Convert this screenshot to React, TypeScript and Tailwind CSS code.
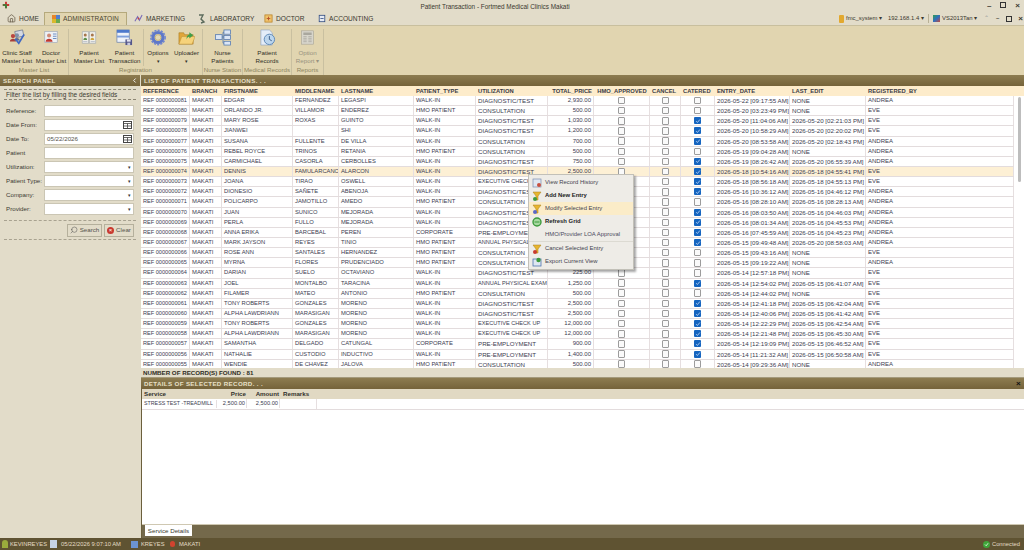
import { ChevronLeft, Search, Home } from "lucide-react";

const FONT = "font-['Liberation_Sans',Arial,sans-serif]";
const GRID =
  "grid grid-cols-[49px_32px_71px_46px_75px_62px_72px_46px_56px_31px_34px_75px_76px_148px]";

const heads = [
  "REFERENCE", "BRANCH", "FIRSTNAME", "MIDDLENAME", "LASTNAME", "PATIENT_TYPE", "UTILIZATION",
  "TOTAL_PRICE", "HMO_APPROVED", "CANCEL", "CATERED", "ENTRY_DATE", "LAST_EDIT", "REGISTERED_BY",
];

const D = "DIAGNOSTIC/TEST";
const C = "CONSULTATION";
const W = "WALK-IN";
const H = "HMO PATIENT";

type Row = [string, string, string, string, string, string, string, boolean, string, string, string];

const rows: Row[] = [
  ["81", "EDGAR", "FERNANDEZ", "LEGASPI", W, D, "2,930.00", false, "2026-05-22 [09:17:55 AM]", "NONE", "ANDREA"],
  ["80", "ORLANDO JR.", "VILLAMOR", "ENDEREZ", H, C, "500.00", false, "2026-05-20 [03:23:49 PM]", "NONE", "EVE"],
  ["79", "MARY ROSE", "ROXAS", "GUINTO", W, D, "1,030.00", true, "2026-05-20 [11:04:06 AM]", "2026-05-20 [02:21:03 PM]", "EVE"],
  ["78", "JIANWEI", "", "SHI", W, D, "1,200.00", true, "2026-05-20 [10:58:29 AM]", "2026-05-20 [02:20:02 PM]", "EVE"],
  ["77", "SUSANA", "FULLENTE", "DE VILLA", W, C, "700.00", true, "2026-05-20 [08:53:58 AM]", "2026-05-20 [02:18:43 PM]", "ANDREA"],
  ["76", "REBEL ROYCE", "TRINOS", "RETANIA", H, C, "500.00", false, "2026-05-19 [09:04:28 AM]", "NONE", "ANDREA"],
  ["75", "CARMICHAEL", "CASORLA", "CERBOLLES", W, D, "750.00", true, "2026-05-19 [08:26:42 AM]", "2026-05-20 [06:55:39 AM]", "ANDREA"],
  ["74", "DENNIS", "FAMULARCANO", "ALARCON", W, D, "2,500.00", true, "2026-05-18 [10:54:16 AM]", "2026-05-18 [04:55:41 PM]", "EVE"],
  ["73", "JOANA", "TIRAO", "OSWELL", W, "EXECUTIVE CHECK UP", "12,000.00", true, "2026-05-18 [08:56:18 AM]", "2026-05-18 [04:55:13 PM]", "EVE"],
  ["72", "DIONESIO", "SAÑETE", "ABENOJA", W, D, "1,500.00", true, "2026-05-16 [10:36:12 AM]", "2026-05-16 [04:46:12 PM]", "ANDREA"],
  ["71", "POLICARPO", "JAMOTILLO", "AMEDO", H, C, "500.00", false, "2026-05-16 [08:28:10 AM]", "2026-05-16 [08:28:13 AM]", "ANDREA"],
  ["70", "JUAN", "SUNICO", "MEJORADA", W, D, "1,200.00", true, "2026-05-16 [08:03:50 AM]", "2026-05-16 [04:46:03 PM]", "ANDREA"],
  ["69", "PERLA", "FULLO", "MEJORADA", W, D, "1,200.00", true, "2026-05-16 [08:01:34 AM]", "2026-05-16 [04:45:53 PM]", "ANDREA"],
  ["68", "ANNA ERIKA", "BARCEBAL", "PEREN", "CORPORATE", "PRE-EMPLOYMENT", "900.00", true, "2026-05-16 [07:45:59 AM]", "2026-05-16 [04:45:23 PM]", "ANDREA"],
  ["67", "MARK JAYSON", "REYES", "TINIO", H, "ANNUAL PHYSICAL EXAM", "1,250.00", true, "2026-05-15 [09:49:48 AM]", "2026-05-20 [08:58:03 AM]", "ANDREA"],
  ["66", "ROSE ANN", "SANTALES", "HERNANDEZ", H, C, "500.00", false, "2026-05-15 [09:43:16 AM]", "NONE", "EVE"],
  ["65", "MYRNA", "FLORES", "PRUDENCIADO", H, C, "500.00", false, "2026-05-15 [09:19:22 AM]", "NONE", "ANDREA"],
  ["64", "DARIAN", "SUELO", "OCTAVIANO", W, D, "225.00", false, "2026-05-14 [12:57:18 PM]", "NONE", "EVE"],
  ["63", "JOEL", "MONTALBO", "TARACINA", W, "ANNUAL PHYSICAL EXAM", "1,250.00", true, "2026-05-14 [12:54:02 PM]", "2026-05-15 [06:41:07 AM]", "EVE"],
  ["62", "FILAMER", "MATEO", "ANTONIO", H, C, "500.00", false, "2026-05-14 [12:44:02 PM]", "NONE", "EVE"],
  ["61", "TONY ROBERTS", "GONZALES", "MORENO", W, D, "2,500.00", true, "2026-05-14 [12:41:18 PM]", "2026-05-15 [06:42:04 AM]", "EVE"],
  ["60", "ALPHA LAWDRIANN", "MARASIGAN", "MORENO", W, D, "2,500.00", true, "2026-05-14 [12:40:06 PM]", "2026-05-15 [06:41:42 AM]", "EVE"],
  ["59", "TONY ROBERTS", "GONZALES", "MORENO", W, "EXECUTIVE CHECK UP", "12,000.00", true, "2026-05-14 [12:22:29 PM]", "2026-05-15 [06:42:54 AM]", "EVE"],
  ["58", "ALPHA LAWDRIANN", "MARASIGAN", "MORENO", W, "EXECUTIVE CHECK UP", "12,000.00", true, "2026-05-14 [12:21:48 PM]", "2026-05-15 [06:45:30 AM]", "EVE"],
  ["57", "SAMANTHA", "DELGADO", "CATUNGAL", "CORPORATE", "PRE-EMPLOYMENT", "900.00", true, "2026-05-14 [12:19:09 PM]", "2026-05-15 [06:46:52 AM]", "EVE"],
  ["56", "NATHALIE", "CUSTODIO", "INDUCTIVO", W, "PRE-EMPLOYMENT", "1,400.00", true, "2026-05-14 [11:21:32 AM]", "2026-05-15 [06:50:58 AM]", "EVE"],
  ["55", "WENDIE", "DE CHAVEZ", "JALOVA", H, C, "500.00", false, "2026-05-14 [09:29:36 AM]", "NONE", "ANDREA"],
];

const CheckBox = ({ on }: { on?: boolean }) =>
  on ? (
    <span className="flex h-[7px] w-[7px] items-center justify-center rounded-[1px] bg-[#1565c0]">
      <svg viewBox="0 0 8 8" className="h-[6px] w-[6px]">
        <path d="M1.5 4.2 3.2 6 6.5 2" fill="none" stroke="#cfe2fa" strokeWidth="1" />
      </svg>
    </span>
  ) : (
    <span className="h-[7.5px] w-[7px] rounded-[1px] border border-[#9c9c9c] bg-[#fafafa]" />
  );

const Cell = ({ children, cls = "" }: { children?: React.ReactNode; cls?: string }) => (
  <div className={`overflow-hidden whitespace-nowrap border-r border-[#e6dfe0] px-[2px] ${cls}`}>{children}</div>
);

const GridRow = ({ row }: { row: Row }) => {
  const selected = row[0] === "74";
  return (
    <div className={`${GRID} h-[10.15px] shrink-0 items-stretch border-b border-[#e3dcdd] leading-[9px] text-[#3c3c50] ${selected ? "bg-[#fdf0d5]" : "bg-white"}`}>
      <Cell cls="text-[5.6px]">REF 00000000{row[0]}</Cell>
      <Cell cls="text-[5.9px]">MAKATI</Cell>
      <Cell cls="text-[5.8px]">{row[1]}</Cell>
      <Cell cls="text-[5.8px]">{row[2]}</Cell>
      <Cell cls="text-[5.8px]">{row[3]}</Cell>
      <Cell cls="text-[5.9px]">{row[4]}</Cell>
      <Cell cls={row[5].length >= 18 ? "text-[5.6px]" : "text-[6.2px]"}>{row[5]}</Cell>
      <Cell cls="text-right text-[6px]">{row[6]}</Cell>
      <Cell cls="flex items-center justify-center"><CheckBox /></Cell>
      <Cell cls="flex items-center justify-center"><CheckBox /></Cell>
      <Cell cls="flex items-center justify-center"><CheckBox on={row[7]} /></Cell>
      <Cell cls="text-[6.2px]">{row[8]}</Cell>
      <Cell cls="text-[6.2px]">{row[9]}</Cell>
      <Cell cls="text-[6px]">{row[10]}</Cell>
    </div>
  );
};

const ClinicIcon = () => (
  <svg viewBox="0 0 18 18" className="h-[16px] w-[18px]">
    <rect x="7" y="2" width="9" height="7" fill="#d5d9e2" stroke="#5d6a86" strokeWidth=".7" transform="rotate(-12 11 5)" />
    <circle cx="4.5" cy="8" r="2.4" fill="#b9453f" />
    <circle cx="9" cy="7" r="2.2" fill="#7f8fa8" />
    <path d="M1 14c0-4 7-4 7 0z" fill="#a83d3a" />
    <path d="M6 13c0-4 6-4 6 0z" fill="#5d6c8a" />
    <path d="m7 11 4 5 6-10" fill="none" stroke="#3f68c4" strokeWidth="2" />
  </svg>
);
const DoctorIcon = () => (
  <svg viewBox="0 0 18 18" className="h-[14px] w-[16px]">
    <rect x="1" y="2" width="16" height="14" fill="#eef1f5" stroke="#9aa6b8" strokeWidth=".8" />
    <circle cx="6.5" cy="7" r="2.6" fill="#cf8a76" />
    <path d="M2 15c0-5 9-5 9 0z" fill="#c0392f" />
    <path d="M11.5 5h4.5M11.5 8h4.5M11.5 11h4.5" stroke="#6f8fc4" strokeWidth="1.3" />
  </svg>
);
const BookIcon = () => (
  <svg viewBox="0 0 18 18" className="h-[15px] w-[16px]">
    <path d="M1 2h7.5v14H1zM9.5 2H17v14H9.5z" fill="#f0efe8" stroke="#9aa3ae" strokeWidth=".7" />
    <circle cx="4.5" cy="6" r="1.8" fill="#a6764c" />
    <path d="M2.3 12c0-3.5 4.4-3.5 4.4 0z" fill="#5c8f49" />
    <circle cx="13" cy="6" r="1.8" fill="#a6764c" />
    <path d="M10.8 12c0-3.5 4.4-3.5 4.4 0z" fill="#d0a53c" />
    <path d="M2 14h5M11 14h5" stroke="#9aa5b8" strokeWidth=".8" />
  </svg>
);
const TransIcon = () => (
  <svg viewBox="0 0 18 18" className="h-[17px] w-[17px]">
    <rect x="1" y="1" width="13" height="13" fill="#eef2f9" stroke="#5f77a8" strokeWidth=".7" />
    <rect x="1" y="1" width="13" height="3" fill="#4d79cc" />
    <rect x="1" y="7" width="13" height="2" fill="#7fa0dc" />
    <rect x="10" y="11" width="7" height="6" fill="#55578a" />
    <rect x="11.5" y="11" width="4" height="2.4" fill="#e6e6ee" />
    <rect x="12" y="14.5" width="3" height="2.5" fill="#c9cbe0" />
  </svg>
);
const GearIcon = () => (
  <svg viewBox="0 0 18 18" className="h-[17px] w-[16px]">
    <circle cx="9" cy="9" r="5.6" fill="none" stroke="#5f78c8" strokeWidth="3.6" />
    <circle cx="9" cy="9" r="8" fill="none" stroke="#7186cf" strokeWidth="1.8" strokeDasharray="2.4 1.3" />
    <circle cx="9" cy="9" r="3.2" fill="#e3d7b3" stroke="#b9a04e" strokeWidth=".6" />
  </svg>
);
const FolderIcon = () => (
  <svg viewBox="0 0 18 18" className="h-[17px] w-[17px]">
    <path d="M1 4h5l1 2h9v10H1z" fill="#e0a63a" stroke="#a97a20" strokeWidth=".6" />
    <path d="M4 8h14l-3 8H1z" fill="#f6d27a" stroke="#b98a2c" strokeWidth=".5" />
    <path d="M9 11c0-3 1-5 3-5V3.500L16 6.500 12 10V8c-1 0-2 1-3 3z" fill="#3f9f4a" />
  </svg>
);
const NurseIcon = () => (
  <svg viewBox="0 0 18 18" className="h-[17px] w-[18px]">
    <rect x="10" y="1" width="7" height="4.500" fill="#dbe6f5" stroke="#4f76b0" strokeWidth=".8" />
    <rect x="1" y="6" width="7" height="5" fill="#dbe6f5" stroke="#4f76b0" strokeWidth=".8" />
    <rect x="10" y="7" width="7" height="4" fill="#dbe6f5" stroke="#4f76b0" strokeWidth=".8" />
    <rect x="10" y="13" width="7" height="4" fill="#dbe6f5" stroke="#4f76b0" strokeWidth=".8" />
    <path d="M8 8.500h2M9 3.500v11.500h1M9 3.500h1" stroke="#4f76b0" strokeWidth=".8" fill="none" />
  </svg>
);
const RecordsIcon = () => (
  <svg viewBox="0 0 18 18" className="h-[17px] w-[17px]">
    <path d="M2 1h9l3 3v13H2z" fill="#e4edf8" stroke="#90a6c6" strokeWidth=".7" />
    <circle cx="11" cy="11" r="5.500" fill="#bcd6ee" stroke="#5b87b5" strokeWidth="1" />
    <path d="M11 7.500V11l2.500 1.500" stroke="#2c4f7c" strokeWidth=".9" fill="none" />
  </svg>
);
const ReportIcon = () => (
  <svg viewBox="0 0 18 18" className="h-[17px] w-[15px]">
    <rect x="2" y="1" width="14" height="16" fill="#d7d5cb" stroke="#a4a298" strokeWidth=".7" />
    <rect x="4" y="3" width="10" height="3" fill="#a9a79e" />
    <path d="M4 8h4M4 10h4M4 12h4M4 14h4M10 8h4M10 10h4M10 12h4M10 14h4" stroke="#a9a79e" strokeWidth=".9" />
  </svg>
);

const RibbonBtn = ({ icon, l1, l2, w, arrow, dim }: { icon: React.ReactNode; l1: string; l2?: string; w: string; arrow?: boolean; dim?: boolean }) => (
  <div className={`flex flex-col items-center ${w} ${dim ? "text-[#97927f]" : "text-[#2f2d26]"}`}>
    <div className="flex h-[17px] items-center justify-center">{icon}</div>
    <div className="mt-[3px] whitespace-nowrap leading-[8.5px]">{l1}</div>
    <div className="whitespace-nowrap leading-[8.5px]">
      {l2}
      {arrow && <span className="text-[5px]">▾</span>}
    </div>
  </div>
);

const RibbonGroup = ({ label, w, children }: { label: string; w: string; children: React.ReactNode }) => (
  <div className={`flex shrink-0 flex-col border-r border-[#c9c0a0] ${w}`}>
    <div className="flex flex-1 justify-center">{children}</div>
    <div className="mb-[1px] whitespace-nowrap text-center leading-[8px] text-[#8d8560]">{label}</div>
  </div>
);

const Tab = ({ icon, label, w }: { icon: React.ReactNode; label: string; w: string }) => (
  <div className={`flex items-center gap-[3px] ${w}`}>
    {icon}
    <span className="text-[#3a382f]">{label}</span>
  </div>
);

const Filter = ({ label, value, kind }: { label: string; value?: string; kind?: "date" | "drop" }) => (
  <div className="flex h-[14px] items-center">
    <span className="w-[44px] whitespace-nowrap pl-[6px] text-[#3c3a32]">{label}</span>
    <div className="flex h-[12px] w-[90px] items-center justify-between border border-[#cbc6b4] bg-white pl-[2px] pr-[1px] text-[#55534c]">
      <span>{value}</span>
      {kind === "date" && (
        <svg viewBox="0 0 9 8" className="h-[8px] w-[9px]">
          <rect x=".5" y=".5" width="8" height="7" fill="#fff" stroke="#444" />
          <path d="M.5 2.500h8M.5 5h8M4.500 2.500v5" stroke="#444" strokeWidth=".8" />
        </svg>
      )}
      {kind === "drop" && <span className="pr-[1px] text-[5px] leading-none text-[#333]">▾</span>}
    </div>
  </div>
);

const MenuItem = ({ icon, label, bold, active, muted }: { icon: React.ReactNode; label: string; bold?: boolean; active?: boolean; muted?: boolean }) => (
  <div className={`flex h-[13px] items-center ${active ? "bg-[#fbecc8]" : ""}`}>
    <div className="flex w-[15px] justify-center pl-[1px]">{icon}</div>
    <span className={`ml-[1px] whitespace-nowrap text-[5.9px] ${bold ? "font-bold text-[#222]" : muted ? "text-[#4b4a60]" : "text-[#44434f]"}`}>{label}</span>
  </div>
);

const Funnel = ({ dot }: { dot: string }) => (
  <svg viewBox="0 0 10 10" className="h-[10px] w-[10px]">
    <path d="M1 1h8L6 5v4H4V5z" fill="#e7b52f" stroke="#a87f1a" strokeWidth=".5" />
    <circle cx="3" cy="8" r="2" fill={dot} />
  </svg>
);

const BrownBar = ({ children, cls = "" }: { children: React.ReactNode; cls?: string }) => (
  <div className={`flex h-[11px] shrink-0 items-center justify-between bg-[linear-gradient(#8d7c50,#75633a)] px-[2px] font-bold tracking-[0.35px] text-[#e8e0c8] ${cls}`}>
    {children}
  </div>
);

export default function App() {
  return (
    <div className={`${FONT} flex h-[550px] w-[1024px] flex-col overflow-hidden bg-[#e2dcc9] text-[6.2px]`}>
      {/* title bar */}
      <div className="relative flex h-[13px] shrink-0 items-center justify-center pr-[34px] text-[#3a382f]">
        <svg viewBox="0 0 10 10" className="absolute left-[2px] top-[1px] h-[8px] w-[8px]">
          <path d="M5 1v8M1 5h8" stroke="#c33" strokeWidth="2.4" />
          <path d="M1 5h4V9" stroke="#2a8a3a" strokeWidth="2" fill="none" />
        </svg>
        <span className="text-[6.4px]">Patient Transaction - Fortmed Medical Clinics Makati</span>
        <div className="absolute right-[4px] top-[1px] flex gap-[9px] text-[8px] font-bold leading-[9px]">
          <span>–</span>
          <span className="mt-[1px] h-[6px] w-[6px] border border-[#333]" />
          <span>×</span>
        </div>
      </div>

      {/* tabs */}
      <div className="flex h-[12.5px] shrink-0 items-center border-b border-[#c8bf9e] text-[6.6px]">
        <Tab w="ml-[7px] w-[37px]" icon={<Home size={9} strokeWidth={2} color="#665b48" />} label="HOME" />
        <div className="flex h-[13px] w-[83px] items-center gap-[3px] border border-b-0 border-[#b5a97c] bg-[#e1d5b0] pl-[7px]">
          <svg viewBox="0 0 8 8" className="h-[8px] w-[8px]">
            <rect width="4" height="4" fill="#e6862a" />
            <rect x="4" width="4" height="4" fill="#4f7fd0" />
            <rect y="4" width="4" height="4" fill="#d9b92c" />
            <rect x="4" y="4" width="4" height="4" fill="#6aa84f" />
          </svg>
          <span className="text-[#4b4632]">ADMINISTRATOIN</span>
        </div>
        <Tab w="ml-[7px] w-[63px]" icon={<svg viewBox="0 0 10 10" className="h-[9px] w-[9px]"><path d="M1 8 4 3l2 4 3-6" fill="none" stroke="#7a6cb8" strokeWidth="1.2" /><circle cx="5" cy="5" r="1" fill="#c94040" /></svg>} label="MARKETING" />
        <Tab w="w-[67px]" icon={<svg viewBox="0 0 10 10" className="h-[10px] w-[10px]"><path d="M2 1h4L4 5l3 3-3 1" fill="none" stroke="#5c6b5c" strokeWidth="1.4" /></svg>} label="LABORATORY" />
        <Tab w="w-[54px]" icon={<svg viewBox="0 0 10 10" className="h-[9px] w-[9px]"><rect x="1" y="1" width="8" height="8" fill="#efc16b" stroke="#b67f24" strokeWidth=".8" /><path d="M3 5h4M5 3v4" stroke="#b5512a" strokeWidth="1" /></svg>} label="DOCTOR" />
        <Tab w="w-[60px]" icon={<svg viewBox="0 0 10 10" className="h-[9px] w-[8px]"><rect x="1.500" y="1" width="7" height="8" fill="#e6ebf4" stroke="#2f4a7f" strokeWidth="1" /><path d="M3 5h4" stroke="#2f4a7f" /></svg>} label="ACCOUNTING" />
        <div className="ml-auto flex items-center whitespace-nowrap text-[5.9px] text-[#3a382f]">
          <span className="mr-[2px] h-[8px] w-[5px] rounded-[1px] bg-[#e2a92f]" />
          <span className="w-[42px]">fmc_system ▾</span>
          <span className="w-[41px] border-r border-[#b9b196]">192.168.1.4 ▾</span>
          <span className="ml-[4px] mr-[2px] h-[7px] w-[7px] bg-[linear-gradient(135deg,#2f9f4f,#2f6fc0_50%,#c94a3a)]" />
          <span className="w-[42px]">VS2013Tan ▾</span>
          <span className="text-[#999]">⌃</span>
          <span className="ml-[7px] font-bold">–</span>
          <span className="ml-[7px] h-[6px] w-[6px] border border-[#333]" />
          <span className="ml-[6px] mr-[1px] text-[8px] font-bold leading-[8px]">×</span>
        </div>
      </div>

      {/* ribbon */}
      <div className="flex h-[49.5px] shrink-0 bg-[#e1d5b0] pt-[3px]">
        <RibbonGroup label="Master List" w="w-[69px]">
          <RibbonBtn w="w-[34px]" icon={<ClinicIcon />} l1="Clinic Staff" l2="Master List" />
          <RibbonBtn w="w-[34px]" icon={<DoctorIcon />} l1="Doctor" l2="Master List" />
        </RibbonGroup>
        <RibbonGroup label="Registration" w="w-[134px]">
          <RibbonBtn w="w-[37px]" icon={<BookIcon />} l1="Patient" l2="Master List" />
          <div className="w-[36px] border-r border-[#c9c0a0]">
            <RibbonBtn w="w-[34px]" icon={<TransIcon />} l1="Patient" l2="Transaction" />
          </div>
          <RibbonBtn w="w-[29px]" icon={<GearIcon />} l1="Options" arrow />
          <RibbonBtn w="w-[28px]" icon={<FolderIcon />} l1="Uploader" arrow />
        </RibbonGroup>
        <RibbonGroup label="Nurse Station" w="w-[40px]">
          <RibbonBtn w="w-[40px]" icon={<NurseIcon />} l1="Nurse" l2="Patients" />
        </RibbonGroup>
        <RibbonGroup label="Medical Records" w="w-[49px]">
          <RibbonBtn w="w-[49px]" icon={<RecordsIcon />} l1="Patient" l2="Records" />
        </RibbonGroup>
        <RibbonGroup label="Reports" w="w-[32px]">
          <RibbonBtn w="w-[32px]" icon={<ReportIcon />} l1="Option" l2="Report ▾" dim />
        </RibbonGroup>
      </div>

      {/* main */}
      <div className="flex min-h-0 flex-1">
        {/* search panel */}
        <div className="flex w-[140px] shrink-0 flex-col">
          <BrownBar>
            <span className="pl-[1px]">SEARCH PANEL</span>
            <ChevronLeft size={7} strokeWidth={3} color="#fff" />
          </BrownBar>
          <div className="mx-[4px] mt-[3px] flex h-[11px] items-center whitespace-nowrap border-y border-dashed border-[#8c8674] pl-[2px] text-[6.5px] text-[#3c3a32]">
            Filter the list by filling the desired fields
          </div>
          <div className="mt-[4px] flex flex-col">
            <Filter label="Reference:" />
            <Filter label="Date From:" kind="date" />
            <Filter label="Date To:" value="05/22/2026" kind="date" />
            <Filter label="Patient" />
            <Filter label="Utilization:" kind="drop" />
            <Filter label="Patient Type:" kind="drop" />
            <Filter label="Company:" kind="drop" />
            <Filter label="Provider:" kind="drop" />
          </div>
          <div className="mx-[4px] mt-[4px] flex h-[20px] items-center justify-end gap-[2px] border-y border-dashed border-[#a8a290] pr-[2px]">
            <div className="flex h-[13px] w-[35px] items-center justify-center gap-[2px] border border-[#b5b09c] text-[#55534c]">
              <Search size={8} strokeWidth={1.6} color="#555" className="-scale-x-100" />
              Search
            </div>
            <div className="flex h-[13px] w-[30px] items-center justify-center gap-[2px] border border-[#b5b09c] text-[#55534c]">
              <span className="flex h-[7px] w-[7px] items-center justify-center rounded-full bg-[#c8392f] text-[6px] leading-none text-white">×</span>
              Clear
            </div>
          </div>
        </div>

        {/* right side */}
        <div className="ml-[1px] flex min-w-0 flex-1 flex-col">
          <BrownBar>
            <span className="pl-[1px]">LIST OF PATIENT TRANSACTIONS. . .</span>
          </BrownBar>
          <div className="relative flex h-[282px] shrink-0">
            <div className="flex w-[873px] flex-col overflow-hidden bg-white">
              <div className={`${GRID} h-[10px] shrink-0 items-center bg-[#fdeccb] text-[5.8px] font-bold leading-[10px] text-[#3a3a44]`}>
                {heads.map((h, i) => (
                  <div key={h} className={`overflow-hidden whitespace-nowrap px-[2px] ${i === 7 ? "text-right" : ""} ${i === 8 ? "text-center" : ""}`}>{h}</div>
                ))}
              </div>
              {rows.map((r) => (
                <GridRow key={r[0]} row={r} />
              ))}
            </div>
            {/* scrollbar */}
            <div className="flex flex-1 flex-col bg-white">
              <div className="h-[10px] bg-[#fdeccb]" />
              <div className="ml-[4px] mt-[1px] h-[85px] w-[3px] rounded-full bg-[#bdbdbd]" />
            </div>
            {/* context menu */}
            <div className="absolute left-[387px] top-[88px] w-[106px] border border-[#c2c0b8] bg-[#eeece7] py-[1px] shadow-[2px_2px_2px_rgba(0,0,0,0.35)]">
              <MenuItem icon={<svg viewBox="0 0 10 10" className="h-[10px] w-[10px]"><rect x="1" y="1" width="8" height="8" fill="#dfe7f2" stroke="#7b8eb0" strokeWidth=".7" /><circle cx="7" cy="7" r="2" fill="#c8503f" /></svg>} label="View Record History" />
              <MenuItem icon={<Funnel dot="#3c9a3c" />} label="Add New Entry" bold />
              <MenuItem icon={<Funnel dot="#5a68c8" />} label="Modify Selected Entry" active />
              <MenuItem icon={<svg viewBox="0 0 10 10" className="h-[10px] w-[10px]"><circle cx="5" cy="5" r="4" fill="#a7d8a0" stroke="#3c9a3c" strokeWidth="1.4" /><path d="M2.500 5h5" stroke="#3c9a3c" /></svg>} label="Refresh Grid" bold />
              <div className="border-b border-[#dcdad2]">
                <MenuItem icon={null} label="HMO/Provider LOA Approval" muted />
              </div>
              <MenuItem icon={<Funnel dot="#c8392f" />} label="Cancel Selected Entry" />
              <MenuItem icon={<svg viewBox="0 0 10 10" className="h-[10px] w-[10px]"><rect x="1" y="2" width="8" height="7" fill="#dfe7f2" stroke="#4f76b0" strokeWidth=".8" /><circle cx="6.500" cy="3" r="2.200" fill="#3c9a3c" /></svg>} label="Export Current View" />
            </div>
          </div>
          <div className="flex h-[10px] shrink-0 items-center border-b border-[#a49a7c] pl-[2px] font-bold text-[#2e2c24]">
            NUMBER OF RECORD(S) FOUND : 81
          </div>
          <BrownBar cls="mt-[0px]">
            <span className="pl-[1px]">DETAILS OF SELECTED RECORD. . .</span>
            <span className="pr-[1px] text-[8px] leading-[8px] text-[#111]">×</span>
          </BrownBar>
          <div className="flex min-h-0 flex-1 flex-col border-l border-[#6b5f3c] bg-white">
            <div className="grid h-[10px] shrink-0 grid-cols-[75px_30px_33px_auto] items-center bg-[#e1d9c3] font-bold text-[#33322c]">
              <span className="pl-[2px]">Service</span>
              <span className="pr-[1px] text-right">Price</span>
              <span className="pr-[1px] text-right">Amount</span>
              <span className="pl-[3px]">Remarks</span>
            </div>
            <div className="grid h-[10.5px] shrink-0 grid-cols-[75px_30px_33px_37px_1fr] items-center border-b border-[#e3dcdd] text-[5.7px] text-[#3c3c50]">
              <span className="whitespace-nowrap border-r border-[#e6dfe0] pl-[2px] text-[5.3px]">STRESS TEST -TREADMILL</span>
              <span className="border-r border-[#e6dfe0] pr-[1px] text-right">2,500.00</span>
              <span className="border-r border-[#e6dfe0] pr-[1px] text-right">2,500.00</span>
              <span className="h-full border-r border-[#e6dfe0]" />
              <span />
            </div>
            <div className="flex-1" />
            <div className="flex h-[14px] shrink-0 items-start border-t border-[#cfc8b2] bg-[#74694b] pl-[3px]">
              <div className="flex h-[11px] w-[47px] items-center justify-center bg-white text-[#3a382f]">Service Details</div>
            </div>
          </div>
        </div>
      </div>

      {/* status bar */}
      <div className="flex h-[12px] shrink-0 items-center bg-[#5f5332] text-[5.8px] text-[#e4ddc6]">
        <span className="ml-[2px] h-[8px] w-[6px] rounded-t-full bg-[#9bac3c]" />
        <span className="ml-[2px] w-[40px]">KEVINREYES</span>
        <span className="h-[8px] w-[7px] bg-[#c6d3e6]" />
        <span className="ml-[4px] w-[70px]">05/22/2026 9:07:10 AM</span>
        <span className="h-[7px] w-[7px] bg-[#6c93d0]" />
        <span className="ml-[3px] w-[29px]">KREYES</span>
        <span className="h-[6px] w-[5px] rounded-full bg-[#d1432f]" />
        <span className="ml-[4px]">MAKATI</span>
        <span className="ml-auto flex h-[7px] w-[7px] items-center justify-center rounded-full bg-[#3fa63a]">
          <svg viewBox="0 0 8 8" className="h-[5px] w-[5px]"><path d="M1.500 4 3.500 6 6.500 2" fill="none" stroke="#fff" strokeWidth="1.200" /></svg>
        </span>
        <span className="ml-[2px] mr-[4px]">Connected</span>
      </div>
    </div>
  );
}
